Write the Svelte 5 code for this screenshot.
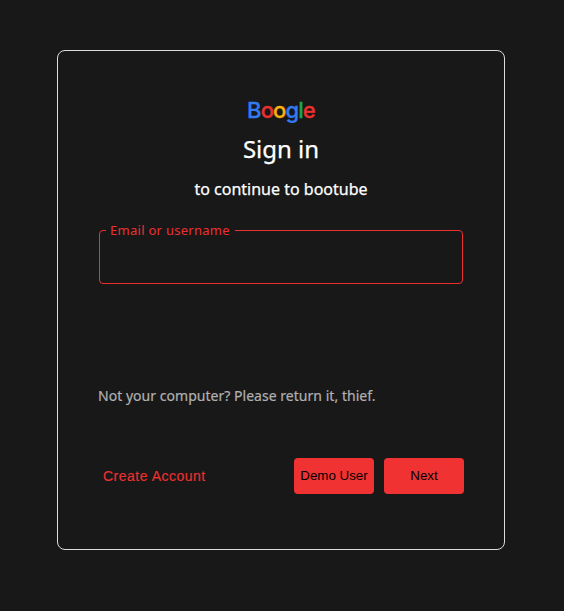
<script>
  const logo = [
    ['B', '#317af2'],
    ['o', '#ec3030'],
    ['o', '#fbb10e'],
    ['g', '#317af2'],
    ['l', '#1fa250'],
    ['e', '#ec3030']
  ];
</script>

<main>
  <form class="card" onsubmit={(e) => e.preventDefault()}>
    <div class="logo">{#each logo as [letter, color]}<span style="color: {color}">{letter}</span>{/each}</div>
    <h1>Sign in</h1>
    <h2>to continue to bootube</h2>
    <fieldset>
      <legend>Email or username</legend>
      <input type="text" aria-label="Email or username" />
    </fieldset>
    <p>Not your computer? Please return it, thief.</p>
    <div class="actions">
      <a href="#create">Create Account</a>
      <div class="buttons">
        <button type="button">Demo User</button>
        <button type="submit">Next</button>
      </div>
    </div>
  </form>
</main>

<style>
  :global(body) {
    background: #181818;
  }
  main {
    box-sizing: border-box;
    height: 611px;
    padding: 50px 0 0 57px;
    font-family: 'Noto Sans', sans-serif;
  }
  .card {
    box-sizing: border-box;
    display: flex;
    flex-direction: column;
    width: 448px;
    height: 500px;
    padding: 43px 40px 0;
    border: 1px solid #dadce0;
    border-radius: 8px;
  }
  .logo {
    height: 34px;
    line-height: 32px;
    text-align: center;
    font-family: Inter, sans-serif;
    font-size: 22px;
    font-weight: 500;
    letter-spacing: -0.9px;
    -webkit-text-stroke: 0.3px currentColor;
  }
  h1,
  h2,
  p {
    margin: 0;
    font-weight: 400;
  }
  h1 {
    height: 40px;
    line-height: 40px;
    margin-top: 1px;
    text-align: center;
    font-size: 24px;
    color: #fff;
    -webkit-text-stroke: 0.25px #fff;
  }
  h2 {
    height: 24px;
    line-height: 24px;
    margin-top: 8px;
    text-align: center;
    font-size: 16px;
    color: #fff;
    -webkit-text-stroke: 0.25px #fff;
  }
  fieldset {
    box-sizing: border-box;
    width: 364px;
    height: 63px;
    margin: 20px 0 0 1px;
    padding: 0 6px;
    border: 1px solid #ec3030;
    border-radius: 4px;
  }
  legend {
    height: 18px;
    line-height: 18px;
    padding: 0 5px 0 4px;
    font-size: 13px;
    letter-spacing: 0.28px;
    color: #ec3030;
  }
  input {
    width: 100%;
    height: 38px;
    padding: 0 6px;
    border: 0;
    outline: 0;
    background: transparent;
    color: #fff;
    font: 16px 'Noto Sans', sans-serif;
  }
  p {
    height: 20px;
    line-height: 20px;
    margin-top: 102px;
    font-size: 14px;
    letter-spacing: 0.03px;
    color: #b0b0b0;
    -webkit-text-stroke: 0.2px #b0b0b0;
  }
  .actions {
    display: flex;
    align-items: center;
    justify-content: space-between;
    width: 366px;
    height: 36px;
    margin-top: 52px;
    font-family: 'Liberation Sans', Arial, sans-serif;
  }
  a {
    padding-left: 5px;
    font-size: 14px;
    letter-spacing: 0.5px;
    color: #ec3030;
    text-decoration: none;
    -webkit-text-stroke: 0.15px #ec3030;
  }
  .buttons {
    display: flex;
    gap: 10px;
  }
  button {
    width: 80px;
    height: 36px;
    padding: 0 0 2px;
    border: 0;
    border-radius: 4px;
    background: #f03232;
    color: #000;
    font: 13.333px 'Liberation Sans', Arial, sans-serif;
  }
</style>
